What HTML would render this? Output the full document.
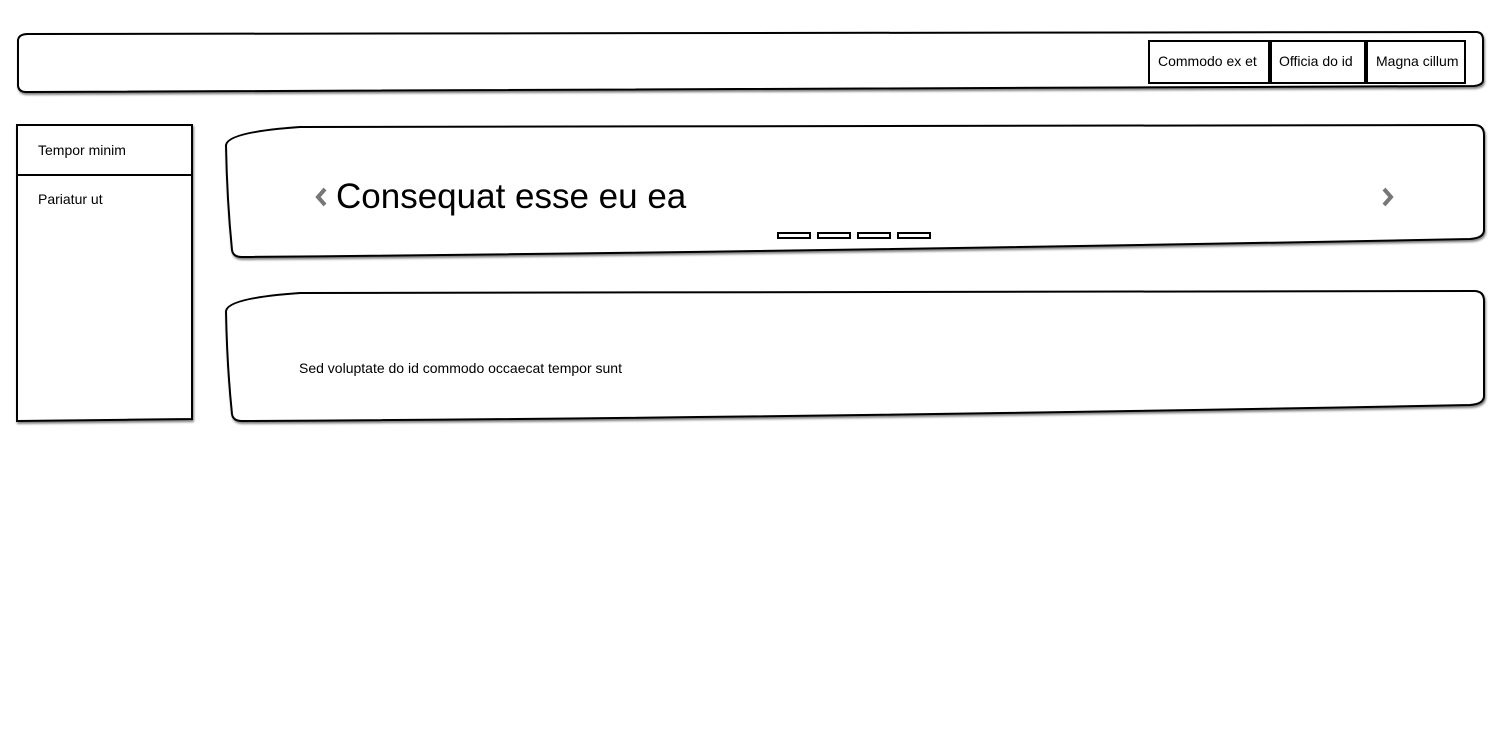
<!DOCTYPE html>
<html><head><meta charset="utf-8"><style>
html,body{margin:0;padding:0;background:#fff;width:1500px;height:752px;overflow:hidden;font-family:"Liberation Sans",sans-serif;color:#000}
svg{position:absolute;left:0;top:0}
.t{position:absolute;white-space:nowrap}
</style></head><body>
<svg width="1500" height="752" viewBox="0 0 1500 752">
<defs><filter id="s" x="-5%" y="-5%" width="110%" height="120%"><feDropShadow dx="1" dy="2" stdDeviation="1" flood-color="#000" flood-opacity="0.5"/></filter></defs>
<g fill="#fff" stroke="#000" stroke-width="2" filter="url(#s)">
<path d="M18,40 Q19,34 28,34 L1476,32 Q1483,32 1483,40 L1483,80 Q1483,85 1474,86 Q800,90 26,92 Q19,92 18,86 Z"/>
<path d="M17,125 L192,125 L192,419 L17,421 Z"/>
<path d="M226,145 Q228,132 300,127 L1474,125 Q1484,125 1484,135 L1484,230 Q1484,238 1470,239 Q800,252 242,257 Q233,257 232,250 Q227,200 226,145 Z"/>
<path d="M226,311 Q228,298 300,293 L1474,291 Q1484,291 1484,301 L1484,396 Q1484,404 1470,405 Q800,418 242,421 Q233,421 232,414 Q227,366 226,311 Z"/>
<rect x="1149" y="41" width="120" height="42"/>
<rect x="1271" y="41" width="94" height="42"/>
<rect x="1367" y="41" width="98" height="42"/>
<rect x="778" y="233" width="32" height="5"/>
<rect x="818" y="233" width="32" height="5"/>
<rect x="858" y="233" width="32" height="5"/>
<rect x="898" y="233" width="32" height="5"/>
</g>
<line x1="17" y1="175" x2="192" y2="175" stroke="#000" stroke-width="2"/>
<path d="M325,189 L318,197 L325,205" fill="none" stroke="#777" stroke-width="4"/>
<path d="M1384,189 L1391,197 L1384,205" fill="none" stroke="#777" stroke-width="4"/>
</svg>
<div class="t" style="left:1158px;top:53px;font-size:14px">Commodo ex et</div>
<div class="t" style="left:1279px;top:53px;font-size:14px">Officia do id</div>
<div class="t" style="left:1376px;top:53px;font-size:14px">Magna cillum</div>
<div class="t" style="left:38px;top:142px;font-size:14px">Tempor minim</div>
<div class="t" style="left:38px;top:191px;font-size:14px">Pariatur ut</div>
<div class="t" style="left:336px;top:177px;font-size:35px">Consequat esse eu ea</div>
<div class="t" style="left:299px;top:360px;font-size:14px">Sed voluptate do id commodo occaecat tempor sunt</div>
</body></html>
